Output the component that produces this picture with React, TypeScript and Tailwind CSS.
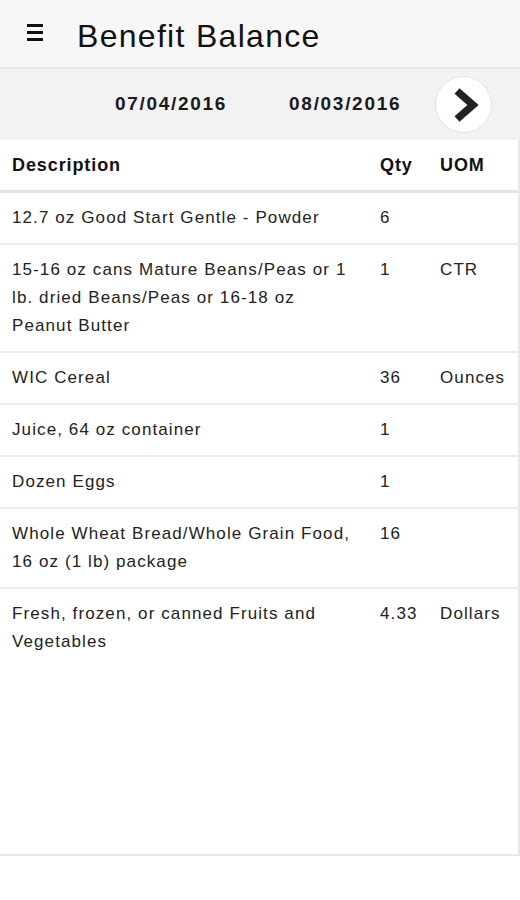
import React from "react";

const rows: { d: string; q: string; u: string }[] = [
  { d: "12.7 oz Good Start Gentle - Powder", q: "6", u: "" },
  { d: "15-16 oz cans Mature Beans/Peas or 1 lb. dried Beans/Peas or 16-18 oz Peanut Butter", q: "1", u: "CTR" },
  { d: "WIC Cereal", q: "36", u: "Ounces" },
  { d: "Juice, 64 oz container", q: "1", u: "" },
  { d: "Dozen Eggs", q: "1", u: "" },
  { d: "Whole Wheat Bread/Whole Grain Food, 16 oz (1 lb) package", q: "16", u: "" },
  { d: "Fresh, frozen, or canned Fruits and Vegetables", q: "4.33", u: "Dollars" },
];

export default function App() {
  return (
    <div className="w-[520px] h-[900px] bg-white overflow-hidden font-['Liberation_Sans',Arial,sans-serif]">
      {/* Header */}
      <div className="h-[69px] bg-[#f7f7f7] border-b-2 border-[#e6e6e6] flex items-center">
        <div className="ml-[27px] w-[16px] flex flex-col gap-[4px] mt-[-2px]">
          <div className="h-[3px] bg-[#111]" />
          <div className="h-[3px] bg-[#111]" />
          <div className="h-[3px] bg-[#111]" />
        </div>
        <div className="ml-[34px] text-[32px] tracking-[1.3px] text-[#111] mt-[4px]">Benefit Balance</div>
      </div>

      {/* Date bar */}
      <div className="h-[71px] bg-[#f2f2f2] flex items-center">
        <div className="ml-[115px] text-[19px] font-bold tracking-[1.7px] text-[#1a1a1a]">07/04/2016</div>
        <div className="ml-[62px] text-[19px] font-bold tracking-[1.7px] text-[#1a1a1a]">08/03/2016</div>
        <div className="ml-[34px] w-[57px] h-[57px] rounded-full bg-white border border-[#e2e2e2] flex items-center justify-center">
          <svg width="28" height="36" viewBox="0 0 28 36" className="ml-[4px]">
            <path d="M5 4 L21 18 L5 32" fill="none" stroke="#222" strokeWidth="7.5" strokeLinejoin="miter" strokeLinecap="butt" />
          </svg>
        </div>
      </div>

      {/* Table */}
      <div className="min-h-[716px] bg-white border-r-2 border-b-2 border-[#e8e8e8] text-[#222]">
        <div className="grid grid-cols-[368px_60px_1fr] h-[53px] items-center border-b-[3px] border-[#e4e4e4] font-bold text-[18px] tracking-[0.9px] text-[#111]">
          <div className="pl-[12px]">Description</div>
          <div className="pl-[12px]">Qty</div>
          <div className="pl-[12px]">UOM</div>
        </div>
        {rows.map((r, i) => (
          <div
            key={i}
            className={
              i < rows.length - 1
                ? "grid grid-cols-[368px_60px_1fr] border-b-2 border-[#ececec] py-[11px] text-[17px] leading-[28px] tracking-[1.1px]"
                : "grid grid-cols-[368px_60px_1fr] py-[11px] text-[17px] leading-[28px] tracking-[1.1px]"
            }
          >
            <div className="pl-[12px] pr-[14px]">{r.d}</div>
            <div className="pl-[12px]">{r.q}</div>
            <div className="pl-[12px] whitespace-nowrap">{r.u}</div>
          </div>
        ))}
      </div>
    </div>
  );
}
